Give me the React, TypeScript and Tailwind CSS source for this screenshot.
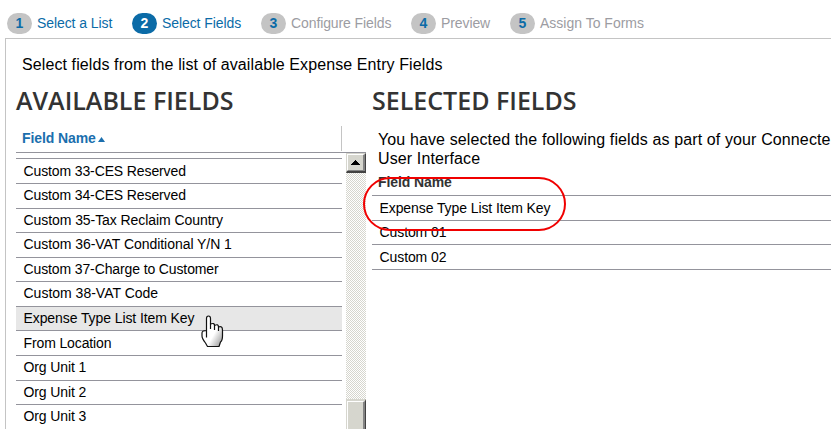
import React from "react";

const steps = [
  { n: 1, label: "Select a List", pill: "bg-[#c4c4c4] text-[#0b6ba7]", text: "text-[#0b6ba7] tracking-[-0.08px]", gap: "mr-[20px]", w: "w-[75px]" },
  { n: 2, label: "Select Fields", pill: "bg-[#0b6ba7] text-white", text: "text-[#0b6ba7] tracking-[-0.08px]", gap: "mr-[20px]", w: "w-[79px]" },
  { n: 3, label: "Configure Fields", pill: "bg-[#c4c4c4] text-[#0b6ba7]", text: "text-[#9c9ca2] tracking-[-0.1px]", gap: "mr-[20px]", w: "w-[100px]" },
  { n: 4, label: "Preview", pill: "bg-[#c4c4c4] text-[#0b6ba7]", text: "text-[#9c9ca2] tracking-[-0.1px]", gap: "mr-[20px]", w: "w-[49px]" },
  { n: 5, label: "Assign To Forms", pill: "bg-[#c4c4c4] text-[#0b6ba7]", text: "text-[#9c9ca2]", gap: "", w: "w-[105px]" },
];

const available = [
  { name: "Custom 33-CES Reserved", h: "h-[25px] tracking-[-0.12px]" },
  { name: "Custom 34-CES Reserved", h: "h-[25px] pb-[2px] tracking-[-0.12px]" },
  { name: "Custom 35-Tax Reclaim Country", h: "h-[24px] tracking-[-0.07px]" },
  { name: "Custom 36-VAT Conditional Y/N 1", h: "h-[25px] pb-[2px] tracking-[-0.05px]" },
  { name: "Custom 37-Charge to Customer", h: "h-[24px] tracking-[-0.12px]" },
  { name: "Custom 38-VAT Code", h: "h-[25px] pb-[2px]" },
  { name: "Expense Type List Item Key", h: "h-[24px] bg-[#e7e7e7] tracking-[-0.09px]" },
  { name: "From Location", h: "h-[25px] tracking-[-0.12px]" },
  { name: "Org Unit 1", h: "h-[25px] pb-[2px] tracking-[-0.12px]" },
  { name: "Org Unit 2", h: "h-[24px] tracking-[-0.12px]" },
  { name: "Org Unit 3", h: "h-[25px] pb-[2px] tracking-[-0.12px]" },
];

const selected = [
  { name: "Expense Type List Item Key", h: "h-[25px]" },
  { name: "Custom 01", h: "h-[24px]" },
  { name: "Custom 02", h: "h-[25px]" },
];

function Scrollbar() {
  return (
    <div className="flex h-[276px] w-[20px] shrink-0 flex-col bg-[repeating-conic-gradient(#d6d6ce_0_25%,#ffffff_0_50%)] bg-[size:2px_2px]">
      <div className="h-[20px] w-[20px] border-t border-l border-r border-b-2 border-t-[#d6d6ce] border-l-[#d6d6ce] border-r-[#424242] border-b-[#424242]">
        <div className="flex h-[17px] w-[18px] items-center justify-center border-t border-l border-r-2 border-b border-t-white border-l-white border-r-[#848484] border-b-[#848484] bg-[#d6d6ce]">
          <svg width="9" height="5" viewBox="0 0 9 5" shapeRendering="crispEdges">
            <path d="M4 0h1v1h1v1h1v1h1v1h1v1H0V4h1V3h1V2h1V1h1z" fill="#000" />
          </svg>
        </div>
      </div>
      <div className="mt-[226px] h-[30px] w-[20px] border-t-2 border-l border-r border-t-[#d6d6ce] border-l-[#d6d6ce] border-r-[#424242]">
        <div className="h-[28px] w-[18px] border-t border-l border-r-2 border-t-white border-l-white border-r-[#848484] bg-[#d6d6ce]" />
      </div>
    </div>
  );
}

function HandCursor() {
  return (
    <svg className="absolute left-[201px] top-[315px]" width="23" height="33" viewBox="0 0 23 33">
      <defs>
        <linearGradient id="hand" x1="0.2" y1="0.3" x2="1" y2="1">
          <stop offset="0.45" stopColor="#fff" />
          <stop offset="1" stopColor="#8c8c8c" />
        </linearGradient>
      </defs>
      <path d="M5.5 22.500V3.500Q5.500 1 7.500 1T9.500 3.500V9Q13.500 7.500 13.500 10.500Q17.500 8.500 17.500 12Q21.500 10.500 21.500 15V21Q21.500 25.500 19.500 27L18 31.500H6.500L4.500 28Q1 23.500 1 21V18Q1 15.500 5.500 15.500" fill="url(#hand)" stroke="#111" strokeWidth="1.200" strokeLinejoin="round" />
      <path d="M9.500 8.500v5.500M13.500 10.500v4.500M17.500 11.500v4.500" stroke="#111" strokeWidth="1.200" fill="none" />
    </svg>
  );
}

export default function App() {
  return (
    <div className="relative h-[429px] w-[831px] overflow-hidden bg-white font-['Liberation_Sans',Arial,sans-serif] text-black">
      <nav className="flex h-[38px] items-start pl-[7px] pt-[13px]">
        {steps.map((s) => (
          <div key={s.n} className={`flex h-[21px] items-center ${s.gap}`}>
            <span className={`flex h-[21px] w-[25px] items-center justify-center rounded-full text-[14px] font-bold ${s.pill}`}>{s.n}</span>
            <span className={`ml-[5px] whitespace-nowrap text-[14px] ${s.w} ${s.text}`}>{s.label}</span>
          </div>
        ))}
      </nav>
      <main className="ml-[5px] h-[391px] border-t border-l border-[#c4c4c4] pl-[10px]">
        <p className="h-[47px] whitespace-nowrap pl-[6px] pt-[14px] text-[16px] leading-[24px] tracking-[0.1px]">Select fields from the list of available Expense Entry Fields</p>
        <div className="flex">
          <section className="w-[350px] shrink-0">
            <h2 className="h-[39px] whitespace-nowrap font-['Open_Sans',sans-serif] text-[25px] font-semibold leading-[29px] text-[#333]">AVAILABLE FIELDS</h2>
            <div className="flex h-[28px] border-b border-[#94949c]">
              <div className="my-[1px] flex w-[326px] items-center border-r border-[#c4c4c4] pl-[6px] text-[14px] font-bold tracking-[-0.1px] text-[#1b6fae]">
                Field Name
                <svg className="ml-[2px] mt-px" width="7" height="5" viewBox="0 0 7 5"><path d="M3.500 0L7 5H0z" fill="#1b6fae" /></svg>
              </div>
            </div>
            <div className="flex justify-between">
              <div className="w-[326px]">
                <div className="h-[6px] border-b border-[#94949c]" />
                {available.map((r) => (
                  <div key={r.name} className={`flex items-center whitespace-nowrap border-b border-[#94949c] pl-[7.5px] text-[14px] ${r.h}`}>{r.name}</div>
                ))}
              </div>
              <Scrollbar />
            </div>
          </section>
          <section className="ml-[6px] w-[459px] shrink-0">
            <h2 className="h-[44px] whitespace-nowrap font-['Open_Sans',sans-serif] text-[25px] font-semibold leading-[29px] text-[#333]">SELECTED FIELDS</h2>
            <p className="h-[46px] whitespace-nowrap pl-[6px] text-[16px] leading-[19px] tracking-[0.12px]">You have selected the following fields as part of your Connecte<br />User Interface</p>
            <div className="-mt-[1px] h-[21px] border-b border-[#94949c] pl-[6px] text-[14px] font-bold leading-[14px] tracking-[-0.1px] text-[#333]">Field Name</div>
            {selected.map((r) => (
              <div key={r.name} className={`flex items-center whitespace-nowrap border-b border-[#94949c] pl-[7.5px] text-[14px] tracking-[-0.09px] ${r.h}`}>{r.name}</div>
            ))}
          </section>
        </div>
      </main>
      <div className="absolute left-[363px] top-[177px] h-[54px] w-[203px] rounded-[27px] border-2 border-[#f00000]" />
      <HandCursor />
    </div>
  );
}
